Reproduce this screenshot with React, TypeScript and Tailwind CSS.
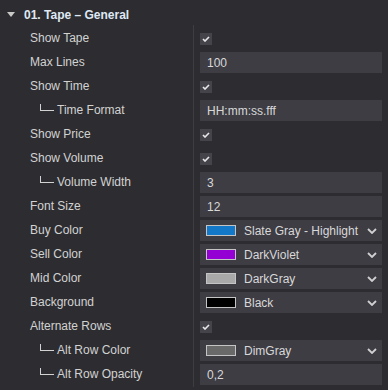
import { ReactNode } from "react";

type Row =
  | { label: string; child?: boolean; kind: "check" }
  | { label: string; child?: boolean; kind: "text"; value: string }
  | { label: string; child?: boolean; kind: "color"; value: string; swatch: string };

const ROWS: Row[] = [
  { label: "Show Tape", kind: "check" },
  { label: "Max Lines", kind: "text", value: "100" },
  { label: "Show Time", kind: "check" },
  { label: "Time Format", child: true, kind: "text", value: "HH:mm:ss.fff" },
  { label: "Show Price", kind: "check" },
  { label: "Show Volume", kind: "check" },
  { label: "Volume Width", child: true, kind: "text", value: "3" },
  { label: "Font Size", kind: "text", value: "12" },
  { label: "Buy Color", kind: "color", value: "Slate Gray - Highlight", swatch: "#1378c8" },
  { label: "Sell Color", kind: "color", value: "DarkViolet", swatch: "#9400d3" },
  { label: "Mid Color", kind: "color", value: "DarkGray", swatch: "#a9a9a9" },
  { label: "Background", kind: "color", value: "Black", swatch: "#000000" },
  { label: "Alternate Rows", kind: "check" },
  { label: "Alt Row Color", child: true, kind: "color", value: "DimGray", swatch: "#696969" },
  { label: "Alt Row Opacity", child: true, kind: "text", value: "0,2" },
];

export default function App() {
  return (
    <div className="w-[388px] h-[390px] bg-[#2d2d31] text-[12px] text-[#d2d2d2] font-['Liberation_Sans',Arial,sans-serif] overflow-hidden">
      <div className="h-[26px] flex items-center pl-[7px] pt-[3px]">
        <svg width="8" height="5" viewBox="0 0 8 5" className="mr-[9px]">
          <path d="M0 0 L8 0 L4 5 Z" fill="#c8c8c8" />
        </svg>
        <span className="font-bold text-[#dfe8f3]">01. Tape – General</span>
      </div>
      <div className="flex">
        <div className="w-[193px] shrink-0">
          {ROWS.map((r) => (
            <div key={r.label} className="h-[24px] flex items-center">
              {r.child ? (
                <span className="flex items-center pl-[40px]">
                  <span className="w-[14px] h-[7px] -mt-[6px] border-l border-b border-[#d2d2d2] mr-[3px]" />
                  {r.label}
                </span>
              ) : (
                <span className="pl-[30px]">{r.label}</span>
              )}
            </div>
          ))}
        </div>
        <div className="w-px bg-[#3d3d42] -mt-px h-[362px]" />
        <div className="flex-1 pl-[6px] pr-[6px]">
          {ROWS.map((r) => (
            <div key={r.label} className="h-[24px] pt-[2px]">
              {renderValue(r)}
            </div>
          ))}
        </div>
      </div>
    </div>
  );
}

function renderValue(r: Row): ReactNode {
  if (r.kind === "check") {
    return (
      <div className="h-[21px] flex items-center">
        <div className="w-[12px] h-[12px] bg-[#45444b] flex items-center justify-center">
          <svg width="8" height="6" viewBox="0 0 8 6">
            <path d="M1 3 L3 5 L7 1" stroke="#e8e8e8" strokeWidth="1.6" fill="none" />
          </svg>
        </div>
      </div>
    );
  }
  if (r.kind === "text") {
    return (
      <div className="h-[21px] bg-[#3e3d44] flex items-center pl-[7px] text-[#d8d8d8]">{r.value}</div>
    );
  }
  return (
    <div className="h-[21px] bg-[#3e3d44] flex items-center pl-[6px] pr-[5px] text-[#d8d8d8]">
      <span className="w-[30px] h-[11px] border border-[#c4c4c4] mr-[8px] shrink-0" style={{ backgroundColor: r.swatch }} />
      <span className="flex-1">{r.value}</span>
      <svg width="10" height="6" viewBox="0 0 10 6">
        <path d="M1 1 L5 5 L9 1" stroke="#d0d0d0" strokeWidth="1.8" fill="none" />
      </svg>
    </div>
  );
}
